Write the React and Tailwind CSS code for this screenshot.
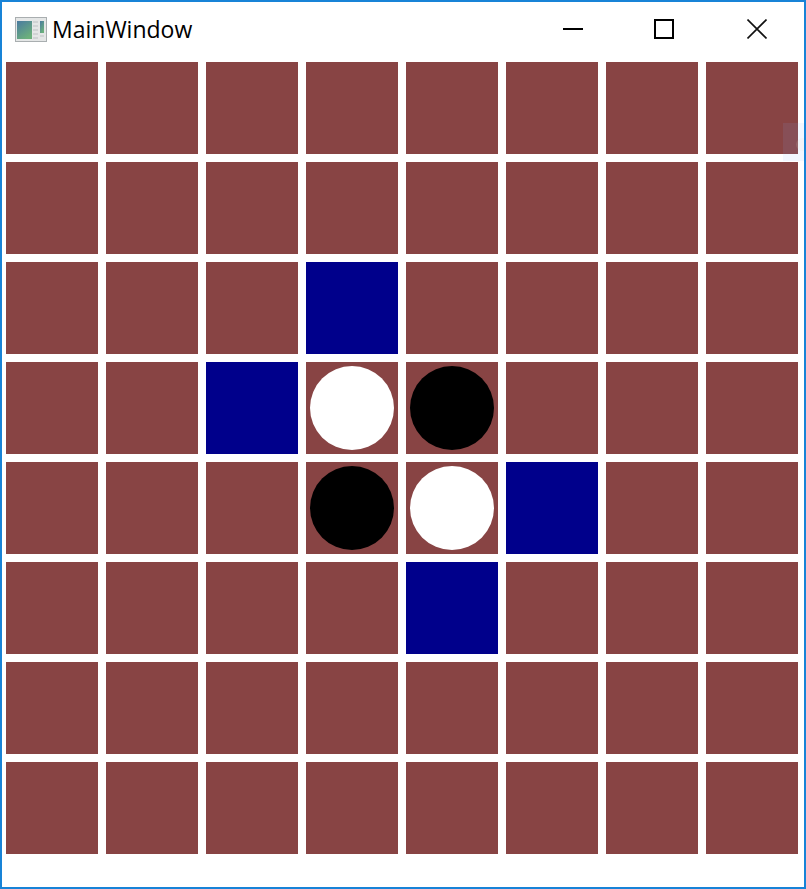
const hints = [19, 26, 37, 44]
const whites = [27, 36]
const blacks = [28, 35]

const WindowIcon = () => (
    <svg width="32" height="25" viewBox="0 0 32 25" className="shrink-0">
        <defs>
            <linearGradient id="pane" x1="0" y1="0" x2="0.6" y2="1">
                <stop offset="0" stopColor="#4a7aa0" />
                <stop offset="1" stopColor="#6cb07c" />
            </linearGradient>
        </defs>
        <rect x="0.5" y="0.5" width="31" height="24" fill="#e4e6e6" stroke="#a9aeb0" />
        <rect x="2" y="4" width="15" height="18" fill="url(#pane)" />
        <rect x="25" y="4" width="4" height="12" fill="url(#pane)" />
        <path d="M18 5h5M18 9h5M18 13h5M18 17h5M18 21h5M25 19h4" stroke="#bcc0c2" strokeWidth="1.2" />
    </svg>
)

const TitleBar = () => (
    <div className="flex h-[60px] items-start">
        <div className="flex h-[54px] items-center gap-[5px] pl-[13px]">
            <WindowIcon />
            <span className="text-[23px] text-black font-['Open_Sans',sans-serif]">MainWindow</span>
        </div>
        <div className="ml-auto flex items-center">
            <div className="flex h-[54px] w-[90px] items-center justify-center">
                <div className="h-[2px] w-5 bg-black" />
            </div>
            <div className="flex h-[54px] w-[92px] items-center justify-center">
                <div className="h-5 w-5 border-2 border-black" />
            </div>
            <div className="flex h-[54px] w-[94px] items-center justify-center">
                <svg width="20" height="20" viewBox="0 0 20 20">
                    <path d="M0.5 0.5L19.5 19.5M19.5 0.5L0.5 19.5" stroke="#111" strokeWidth="1.6" fill="none" />
                </svg>
            </div>
        </div>
    </div>
)

const Cell = ({ index }) => {
    const isHint = hints.includes(index)
    const isWhite = whites.includes(index)
    const isBlack = blacks.includes(index)

    return (
        <div className={`flex h-[92px] w-[92px] items-center justify-center ${isHint ? 'bg-[#00008b]' : 'bg-[#884444]'}`}>
            {isWhite && <div className="h-[84px] w-[84px] rounded-full bg-white" />}
            {isBlack && <div className="h-[84px] w-[84px] rounded-full bg-black" />}
        </div>
    )
}

export default function App() {
    return (
        <div className="relative h-[889px] w-[806px] overflow-hidden border-2 border-[#1883d7] bg-white">
            <TitleBar />
            <div className="grid grid-cols-[repeat(8,92px)] gap-2 pl-1">
                {Array.from({ length: 64 }, (_, i) => (
                    <Cell key={i} index={i} />
                ))}
            </div>
            {/* faint ghost of a cursor highlight on the right edge */}
            <div className="absolute right-0 top-[121px] h-[38px] w-[21px] overflow-hidden bg-[#7dafff]/10">
                <div className="absolute left-[13px] top-[15px] h-[13px] w-[13px] rounded-full bg-[#e8dfc8]/15" />
            </div>
        </div>
    )
}
